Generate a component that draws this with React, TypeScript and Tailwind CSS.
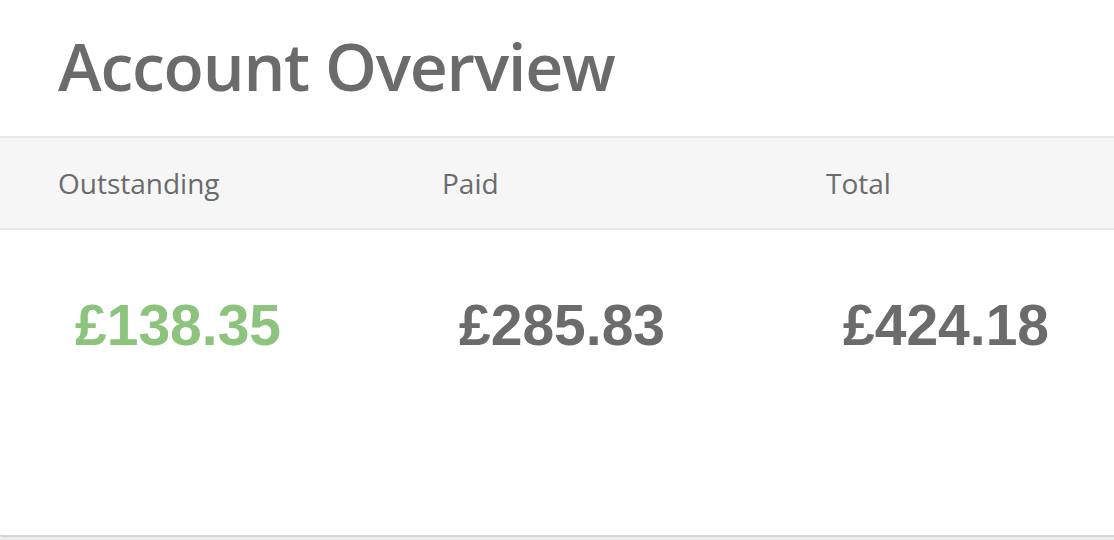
import React from "react";

export default function App() {
  const cols = [
    { label: "Outstanding", value: "£138.35", color: "text-[#8cc47e]" },
    { label: "Paid", value: "£285.83", color: "text-[#6b6b6b]" },
    { label: "Total", value: "£424.18", color: "text-[#6b6b6b]" },
  ];
  return (
    <div className="w-[1114px] h-[540px] bg-[#ececec] overflow-hidden" style={{ fontFamily: '"Open Sans", sans-serif' }}>
      <div className="bg-white h-[537px] border-b-2 border-[#d6d6d6] rounded-bl-[3px]">
        <div className="h-[136px] pl-[58px] flex items-center">
          <h1 className="text-[66px] font-semibold text-[#6b6b6b] leading-none -mt-[6px] tracking-[-1.2px]">Account Overview</h1>
        </div>
        <div className="h-[94px] bg-[#f5f6f5] border-y-2 border-[#e7e8e7] flex pl-[58px] items-center">
          {cols.map((c) => (
            <div key={c.label} className="w-[384px] shrink-0 text-[28px] text-[#6b6b6b] leading-none">
              {c.label}
            </div>
          ))}
        </div>
        <div className="flex pl-[75px] pt-[67px]">
          {cols.map((c) => (
            <div
              key={c.label}
              className={`w-[384px] shrink-0 text-[57px] font-bold leading-none ${c.color}`}
              style={{ fontFamily: '"Liberation Sans", sans-serif' }}
            >
              {c.value}
            </div>
          ))}
        </div>
      </div>
    </div>
  );
}
